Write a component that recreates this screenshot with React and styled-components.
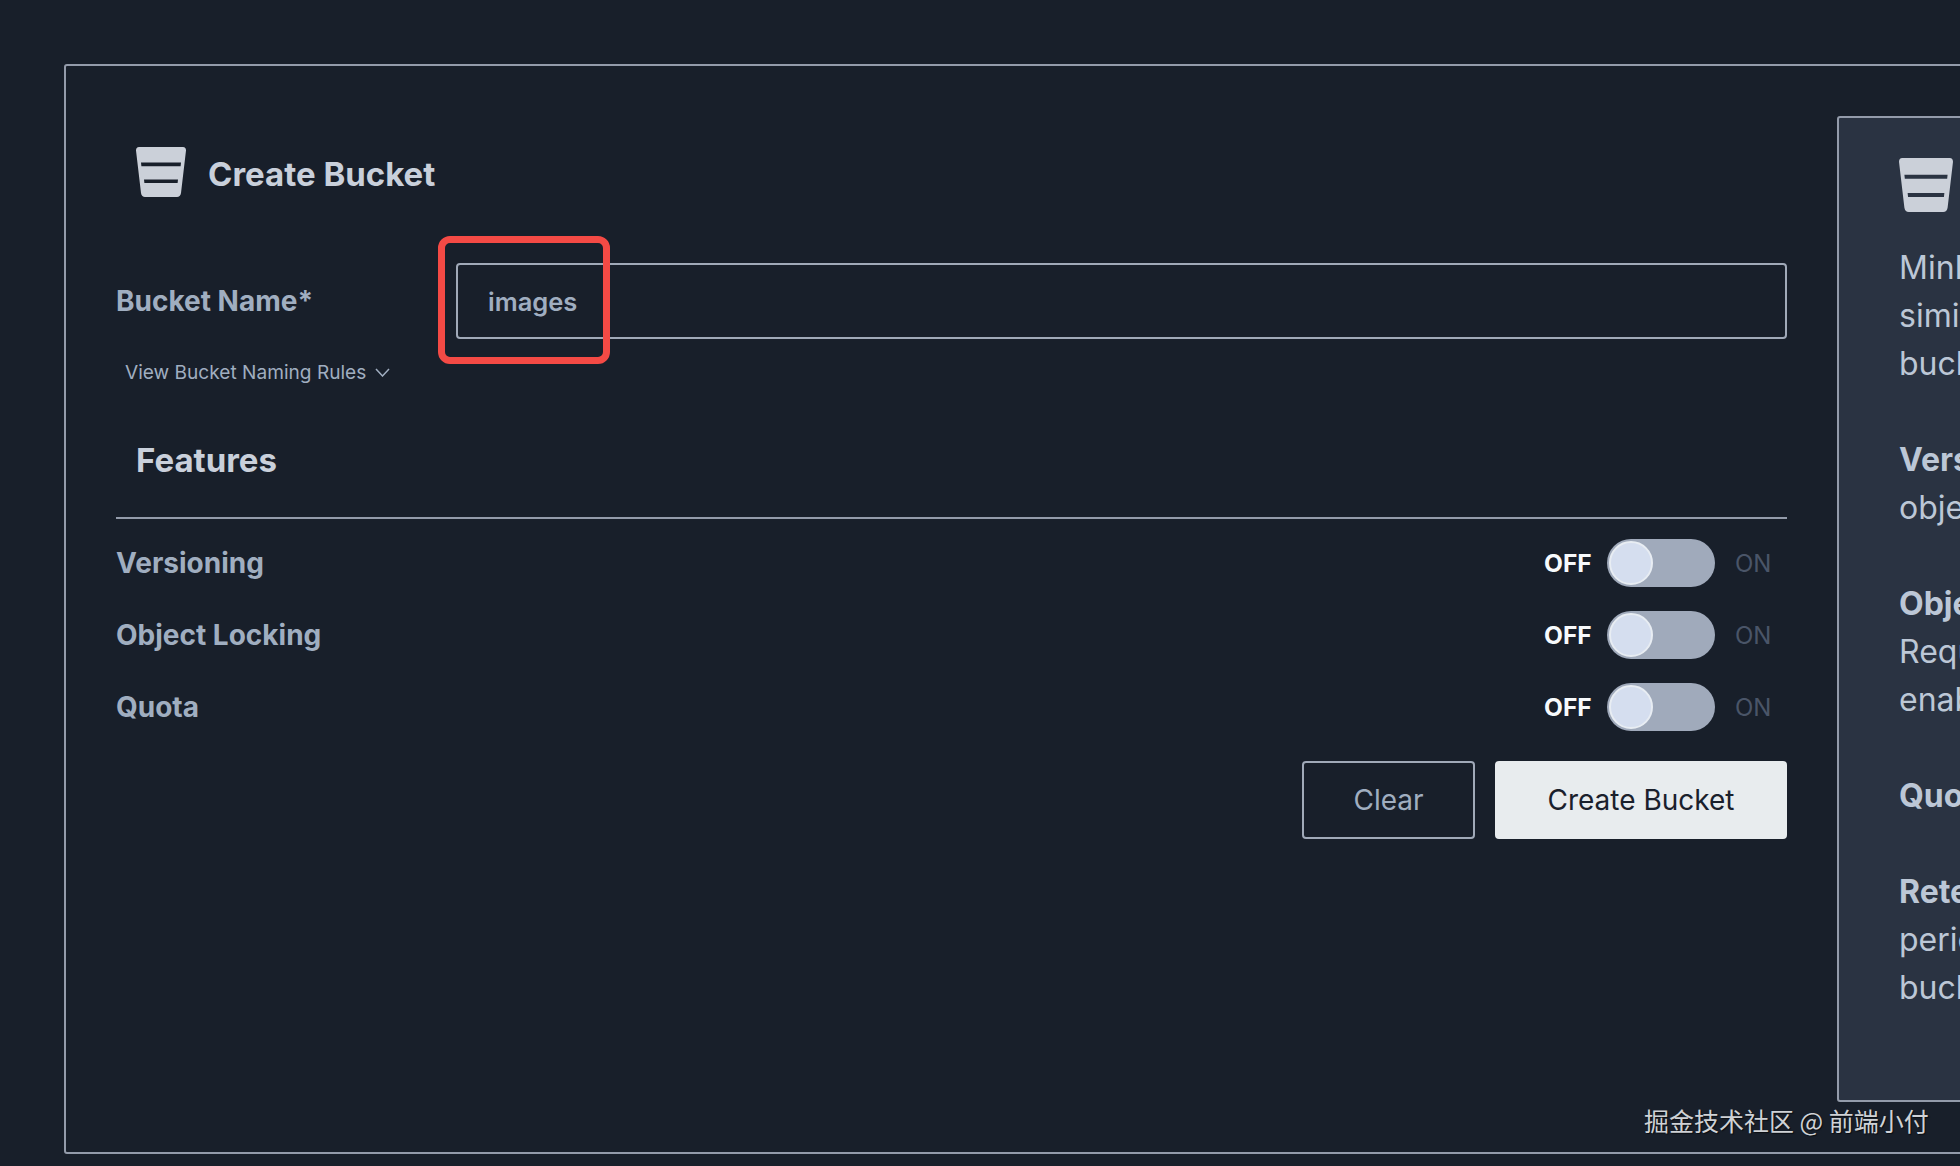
import React from "react";
import styled, { createGlobalStyle } from "styled-components";

const Global = createGlobalStyle`
  html, body { margin: 0; padding: 0; background: #181f2a; height: 100%; overflow: hidden; }
  * { box-sizing: border-box; }
  #root { font-family: Inter, "Liberation Sans", sans-serif; }
`;

const Page = styled.div`
  position: relative;
  width: 1960px;
  height: 1166px;
  overflow: hidden;
  padding: 64px 0 0 64px;
  background: #181f2a;
`;

const Shell = styled.div`
  width: 2100px;
  height: 1090px;
  border: 2px solid #939baa;
  border-radius: 3px;
  padding: 50px 0 0 50px;
  display: flex;
  gap: 50px;
  align-items: flex-start;
`;

const Form = styled.section`
  width: 1671px;
  flex: none;
`;

const TitleRow = styled.div`
  display: flex;
  align-items: center;
  gap: 22px;
  padding: 31px 0 0 20px;
  height: 81px;
`;

const Title = styled.h1`
  margin: 0;
  padding-top: 3px;
  font-size: 33px;
  font-weight: 700;
  line-height: 50px;
  color: #c9d0db;
`;

const BucketSvg = styled.svg`
  display: block;
  flex: none;
  color: #cbd0d9;
`;

const BucketIcon = ({ size }) => (
  <BucketSvg width={size} height={size} viewBox="0 0 50 50">
    <path
      fillRule="evenodd"
      fill="currentColor"
      d="M3 0H47C49 0 50 1.500 50 3.500L45 46C44.700 48.500 43 50 41 50H9C7 50 5.300 48.500 5 46L0 3.500C0 1.500 1 0 3 0ZM5 15.500L5.400 19.300H44.600L45 15.500ZM8 32.500L8.400 36H41.600L42 32.500Z"
    />
  </BucketSvg>
);

const NameRow = styled.div`
  display: flex;
  align-items: center;
  margin-top: 66px;
  height: 76px;
`;

const FieldLabel = styled.label`
  width: 340px;
  flex: none;
  font-size: 28px;
  font-weight: 700;
  color: #a0aec0;
`;

const NameInput = styled.div`
  flex: 1;
  height: 76px;
  border: 2px solid #a0a9b8;
  border-radius: 4px;
  padding-left: 30px;
  display: flex;
  align-items: center;
  font-size: 25.500px;
  font-weight: 600;
  color: #a0aec0;
`;

const Highlight = styled.div`
  position: absolute;
  left: 438px;
  top: 236px;
  width: 172px;
  height: 128px;
  border: 7px solid #f44a45;
  border-radius: 12px;
  pointer-events: none;
`;

const RulesLink = styled.div`
  display: flex;
  align-items: center;
  gap: 9px;
  margin: 21px 0 0 9px;
  height: 24px;
  font-size: 19.100px;
  color: #a0aec0;
`;

const SectionHead = styled.h2`
  margin: 51px 0 0;
  padding: 0 0 24px 20px;
  height: 84px;
  font-size: 33px;
  line-height: 50px;
  font-weight: 700;
  color: #c9d0db;
  border-bottom: 2px solid #939baa;
`;

const Features = styled.div`
  margin-top: 8px;
  display: flex;
  flex-direction: column;
`;

const FeatureRow = styled.div`
  height: 72px;
  display: flex;
  align-items: center;
  justify-content: space-between;
`;

const FeatureName = styled.span`
  font-size: 28px;
  font-weight: 700;
  color: #a0aec0;
`;

const SwitchWrap = styled.div`
  display: flex;
  align-items: center;
  padding-right: 16px;
`;

const OffText = styled.span`
  width: 47px;
  font-size: 24.500px;
  font-weight: 700;
  color: #f7fafc;
  white-space: nowrap;
`;

const Track = styled.div`
  width: 108px;
  height: 48px;
  margin: 0 20px 0 16px;
  padding: 2px;
  border-radius: 24px;
  background: #a0aabb;
`;

const Knob = styled.div`
  width: 44px;
  height: 44px;
  border-radius: 50%;
  background: #d5deef;
  border: 2px solid #e8edf3;
`;

const OnText = styled.span`
  width: 36px;
  font-size: 24px;
  color: #4a5568;
`;

const Actions = styled.div`
  display: flex;
  justify-content: flex-end;
  gap: 20px;
  margin-top: 18px;
`;

const Button = styled.button`
  height: 78px;
  width: ${(p) => p.$w}px;
  border-radius: 4px;
  font: 400 28px Inter, "Liberation Sans", sans-serif;
  border: 2px solid ${(p) => (p.$primary ? "#e8ecee" : "#a0a9b8")};
  background: ${(p) => (p.$primary ? "#e8ecee" : "transparent")};
  color: ${(p) => (p.$primary ? "#1a202c" : "#a0aec0")};
`;

const Aside = styled.aside`
  width: 600px;
  height: 986px;
  flex: none;
  background: #2a3342;
  border: 2px solid #939baa;
  border-radius: 3px;
  padding: 40px 0 0 60px;
`;

const Help = styled.p`
  margin: ${(p) => p.$top}px 0 0;
  font-size: 32px;
  line-height: 48px;
  color: #bcc7d6;
  white-space: nowrap;
`;

const Strong = styled.strong`
  font-weight: 700;
`;

const Watermark = styled.div`
  position: absolute;
  left: 1644px;
  top: 1104px;
  font-family: "Noto Sans CJK SC", "Liberation Sans", sans-serif;
  font-size: 25px;
  line-height: 32px;
  color: #cfd2d6;
  white-space: nowrap;
  text-shadow: 1px 1px 1px rgba(0, 0, 0, 0.6);
`;

const rows = ["Versioning", "Object Locking", "Quota"];

export default function App() {
  return (
    <Page>
      <Global />
      <Shell>
        <Form>
          <TitleRow>
            <BucketIcon size={50} />
            <Title>Create Bucket</Title>
          </TitleRow>
          <NameRow>
            <FieldLabel>Bucket Name*</FieldLabel>
            <NameInput>images</NameInput>
          </NameRow>
          <RulesLink>
            View Bucket Naming Rules
            <svg width="15" height="9" viewBox="0 0 15 9" fill="none" stroke="#a0aec0" strokeWidth="1.500">
              <path d="M1 1L7.500 8L14 1" />
            </svg>
          </RulesLink>
          <SectionHead>Features</SectionHead>
          <Features>
            {rows.map((name) => (
              <FeatureRow key={name}>
                <FeatureName>{name}</FeatureName>
                <SwitchWrap>
                  <OffText>OFF</OffText>
                  <Track>
                    <Knob />
                  </Track>
                  <OnText>ON</OnText>
                </SwitchWrap>
              </FeatureRow>
            ))}
          </Features>
          <Actions>
            <Button $w={173}>Clear</Button>
            <Button $w={292} $primary>Create Bucket</Button>
          </Actions>
        </Form>
        <Aside>
          <BucketIcon size={54} />
          <Help $top={32}>
            MinIO uses buckets to organize objects. A bucket is
            <br />
            similar to a folder or directory in a filesystem, where each
            <br />
            bucket can hold an arbitrary number of objects.
          </Help>
          <Help $top={48}>
            <Strong>Versioning</Strong> allows to keep multiple versions of the same
            <br />
            object under the same key.
          </Help>
          <Help $top={48}>
            <Strong>Object Locking</Strong> prevents objects from being deleted.
            <br />
            Required to support retention and legal hold. Can only be
            <br />
            enabled at bucket creation.
          </Help>
          <Help $top={48}>
            <Strong>Quota</Strong> limits the amount of data in the bucket.
          </Help>
          <Help $top={48}>
            <Strong>Retention</Strong> imposes rules to prevent object deletion for a
            <br />
            period of time. Versioning must be enabled in order to set
            <br />
            bucket retention policies.
          </Help>
        </Aside>
      </Shell>
      <Highlight />
      <Watermark>掘金技术社区 @ 前端小付</Watermark>
    </Page>
  );
}
